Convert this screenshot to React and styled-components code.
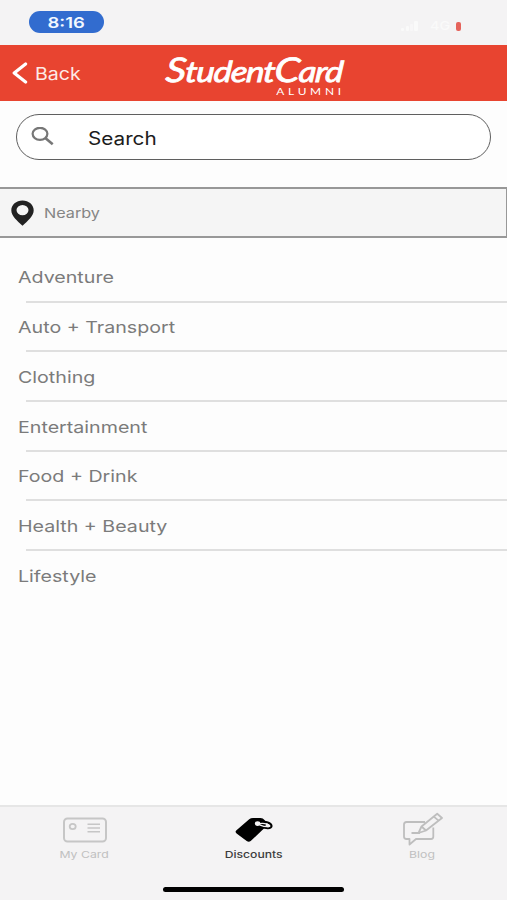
import React from "react";
import styled, { createGlobalStyle } from "styled-components";

const GlobalStyle = createGlobalStyle`
  * {
    box-sizing: border-box;
  }
  body {
    margin: 0;
    background: #fdfdfd;
    font-family: Inter, "Liberation Sans", sans-serif;
  }
`;

const Container = styled.div`
  display: flex;
  flex-direction: column;
  width: 100%;
  height: 100vh;
  overflow: hidden;
  background: #fdfdfd;
`;

// wide lettering used by every label in the app
const WideText = styled.span`
  display: inline-block;
  padding-top: ${(props) => props.$drop || 0}px;
  font-size: ${(props) => props.$size}px;
  font-weight: ${(props) => props.$weight || 400};
  line-height: 1.2;
  white-space: nowrap;
  transform: scaleX(${(props) => props.$stretch || 1.2});
  transform-origin: ${(props) => props.$origin || "left"} center;
`;

const StatusBar = styled.div`
  display: flex;
  justify-content: space-between;
  align-items: flex-start;
  flex: none;
  height: 45px;
  padding: 11px 46px 0 29px;
  background: #f4f3f4;
`;

const TimePill = styled.div`
  display: flex;
  align-items: center;
  justify-content: center;
  width: 75px;
  height: 22px;
  border-radius: 11px;
  background: #326ccf;
  color: #f3f8ff;
`;

const StatusIcons = styled.div`
  display: flex;
  align-items: center;
  gap: 11px;
  height: 11px;
  margin-top: 10px;
  color: #fafafa;
`;

const Battery = styled.div`
  width: 5px;
  height: 9px;
  margin-left: -2px;
  border-radius: 2px;
  background: #e5635b;
`;

const Header = styled.header`
  display: grid;
  grid-template-columns: 1fr 178px 1fr;
  flex: none;
  height: 56px;
  background: #e84430;
  color: #ffffff;
`;

const BackButton = styled.div`
  display: flex;
  align-items: center;
  gap: 7px;
  padding-left: 12px;
  color: #fdeae6;
`;

const Logo = styled.div`
  display: flex;
  flex-direction: column;
  align-items: flex-end;
  padding-top: 6px;
`;

const LogoScript = styled.div`
  width: 178px;
  height: 36px;
  padding-left: 1px;
  font-family: Lato, sans-serif;
  font-size: 29px;
  font-style: italic;
  font-weight: 400;
  line-height: 36px;
  letter-spacing: -0.9px;
  white-space: nowrap;
  -webkit-text-stroke: 0.8px #ffffff;
  transform: scaleX(1.19) skewX(-4deg);
  transform-origin: left center;
`;

const LogoCapital = styled.span`
  font-size: 34px;
`;

const LogoSub = styled.div`
  margin-right: -2px;
  font-family: Lato, sans-serif;
  font-size: 9.5px;
  line-height: 10px;
  letter-spacing: 3px;
  transform: scaleX(1.25);
  transform-origin: right center;
`;

const SearchBox = styled.div`
  display: flex;
  align-items: center;
  flex: none;
  gap: 33px;
  height: 46px;
  margin: 13px 16px 0;
  padding-left: 14px;
  border: 1.5px solid #5f5f5f;
  border-radius: 23px;
  background: #ffffff;
  color: #1c1c1c;
`;

const NearbyRow = styled.div`
  display: flex;
  align-items: center;
  flex: none;
  gap: 10px;
  height: 51px;
  margin-top: 27px;
  padding-left: 11px;
  border: 2px solid #989898;
  border-left: none;
  border-right-width: 1px;
  background: #f5f5f5;
  color: #858585;
`;

const List = styled.div`
  flex: 1;
  padding-top: 14px;
`;

const ListItem = styled.div`
  display: flex;
  align-items: center;
  height: 49.7px;
  padding-left: 18.4px;
  color: #7b7b7b;
`;

const Divider = styled.div`
  height: 2px;
  margin: -1px 0 -1px 26px;
  background: #dfdfdf;
`;

const TabBar = styled.nav`
  display: grid;
  grid-template-columns: repeat(3, 1fr);
  flex: none;
  height: 78px;
  border-top: 2px solid #e6e6e6;
  background: #f4f3f4;
`;

const Tab = styled.div`
  display: flex;
  flex-direction: column;
  align-items: center;
  padding-top: 5px;
  color: ${(props) => (props.$active ? "#3c3c3c" : "#c0c0c0")};

  svg {
    margin-bottom: 3px;
  }
`;

const HomeArea = styled.div`
  display: flex;
  justify-content: center;
  flex: none;
  height: 17px;
  padding-top: 4px;
  background: #f4f3f4;
`;

const HomeIndicator = styled.div`
  width: 181px;
  height: 5px;
  border-radius: 3px;
  background: #000000;
`;

const SignalIcon = () => (
  <svg width="18" height="11" viewBox="0 0 18 11" fill="currentColor">
    <rect x="0" y="7" width="3" height="3" rx="1" />
    <rect x="5" y="5" width="3" height="5" rx="1" />
    <rect x="9" y="3" width="3" height="7" rx="1" opacity="0.6" />
    <rect x="13" y="0" width="4" height="10" rx="1" />
  </svg>
);

const BackIcon = () => (
  <svg width="16" height="22" viewBox="0 0 16 22" fill="none">
    <path d="M13.6 2 L2.2 11 L13.6 20" stroke="#ffffff" strokeWidth="3.2" strokeLinecap="round" strokeLinejoin="round" />
  </svg>
);

const SearchIcon = () => (
  <svg width="24" height="20" viewBox="0 0 24 20" fill="none" stroke="#777777">
    <ellipse cx="9" cy="6.8" rx="7.4" ry="6" strokeWidth="2.2" />
    <path d="M14.3 11 L21.7 17.3" strokeWidth="2.6" />
  </svg>
);

const PinIcon = () => (
  <svg width="23" height="26" viewBox="0 0 23 26">
    <path
      d="M11.5 0.5 C5.2 0.5 0.3 4.8 0.3 10.3 C0.3 16.5 6.5 21 11.5 25.7 C16.5 21 22.7 16.5 22.7 10.3 C22.7 4.8 17.8 0.5 11.5 0.5 Z M11.5 4.9 A6 5.2 0 1 1 11.5 15.3 A6 5.2 0 1 1 11.5 4.9 Z"
      fill="#222222"
      fillRule="evenodd"
    />
  </svg>
);

const CardIcon = () => (
  <svg width="44" height="34" viewBox="0 0 44 34" fill="none" stroke="#c6c6c6">
    <rect x="1" y="6.5" width="42" height="23" rx="3.5" strokeWidth="2" />
    <ellipse cx="9.7" cy="14.5" rx="3" ry="2.7" strokeWidth="1.8" />
    <path d="M24.5 12.2 H37 M24.5 16 H37 M24.5 19.8 H37" strokeWidth="1.6" />
  </svg>
);

const TagIcon = () => (
  <svg width="38" height="34" viewBox="0 0 38 34">
    <path
      d="M1.2 18.5 L14.2 7.2 Q15.8 6 18 6 H25.5 Q28 6 29.5 8 L31 10 L30.5 15 L15.7 29 Q13.7 30.6 11.7 29 L1.6 21.5 Q-0.3 20 1.2 18.5 Z"
      fill="#000000"
    />
    <ellipse cx="22.6" cy="11.6" rx="2.7" ry="2.3" fill="#f4f3f4" />
    <path d="M26.5 10.4 C30 9 36.3 10.8 36.6 14 C36.5 17 30 16.6 27 14.6" fill="none" stroke="#000000" strokeWidth="2" />
    <path d="M24 11.6 Q28.5 10.8 32 12 Q35 13.4 33.6 14.6 Q30.5 15.2 24.5 12.8" fill="none" stroke="#f4f3f4" strokeWidth="1.3" />
  </svg>
);

const BlogIcon = () => (
  <svg width="40" height="34" viewBox="0 0 40 34" fill="none" stroke="#bebebe" strokeWidth="1.8" strokeLinejoin="round">
    <path d="M22 10 H3.5 Q1 10 1 12.5 V24.5 Q1 27 3.5 27 H6.5 V32.5 L13 27 H28 Q30.3 27 30.3 24.8 V15.5" />
    <path d="M15.5 21 L18.5 14.5 L34.2 1.8 L39 6 L23 18.5 Z" fill="#f4f3f4" />
    <path d="M30.8 4.6 L35.6 8.6 M18.5 14.5 L23 18.5 M8.5 21 H17" />
  </svg>
);

const categories = [
  { name: "Adventure" },
  { name: "Auto + Transport" },
  { name: "Clothing" },
  { name: "Entertainment" },
  { name: "Food + Drink" },
  { name: "Health + Beauty" },
  { name: "Lifestyle" },
];

const App = () => {
  return (
    <Container>
      <GlobalStyle />
      <StatusBar>
        <TimePill>
          <WideText $size={15} $weight={600} $origin="center" $stretch={1.23} $drop={1}>
            8:16
          </WideText>
        </TimePill>
        <StatusIcons>
          <SignalIcon />
          <WideText $size={12} $weight={500}>
            4G
          </WideText>
          <Battery />
        </StatusIcons>
      </StatusBar>
      <Header>
        <BackButton>
          <BackIcon />
          <WideText $size={17} $stretch={1.15} $drop={2}>
            Back
          </WideText>
        </BackButton>
        <Logo>
          <LogoScript>
            <LogoCapital>S</LogoCapital>tudent<LogoCapital>C</LogoCapital>ard
          </LogoScript>
          <LogoSub>ALUMNI</LogoSub>
        </Logo>
      </Header>
      <SearchBox>
        <SearchIcon />
        <WideText $size={18} $stretch={1.15} $drop={3}>
          Search
        </WideText>
      </SearchBox>
      <NearbyRow>
        <PinIcon />
        <WideText $size={13.5} $drop={1}>
          Nearby
        </WideText>
      </NearbyRow>
      <List>
        {categories.map((item, index) => (
          <React.Fragment key={item.name}>
            {index > 0 && <Divider />}
            <ListItem>
              <WideText $size={16.5} $drop={3} $stretch={1.19}>
                {item.name}
              </WideText>
            </ListItem>
          </React.Fragment>
        ))}
      </List>
      <TabBar>
        <Tab>
          <CardIcon />
          <WideText $size={9.5} $origin="center" $stretch={1.29}>
            My Card
          </WideText>
        </Tab>
        <Tab $active>
          <TagIcon />
          <WideText $size={9.5} $weight={500} $origin="center" $stretch={1.28}>
            Discounts
          </WideText>
        </Tab>
        <Tab>
          <BlogIcon />
          <WideText $size={9.5} $origin="center" $stretch={1.29}>
            Blog
          </WideText>
        </Tab>
      </TabBar>
      <HomeArea>
        <HomeIndicator />
      </HomeArea>
    </Container>
  );
};

export default App;
